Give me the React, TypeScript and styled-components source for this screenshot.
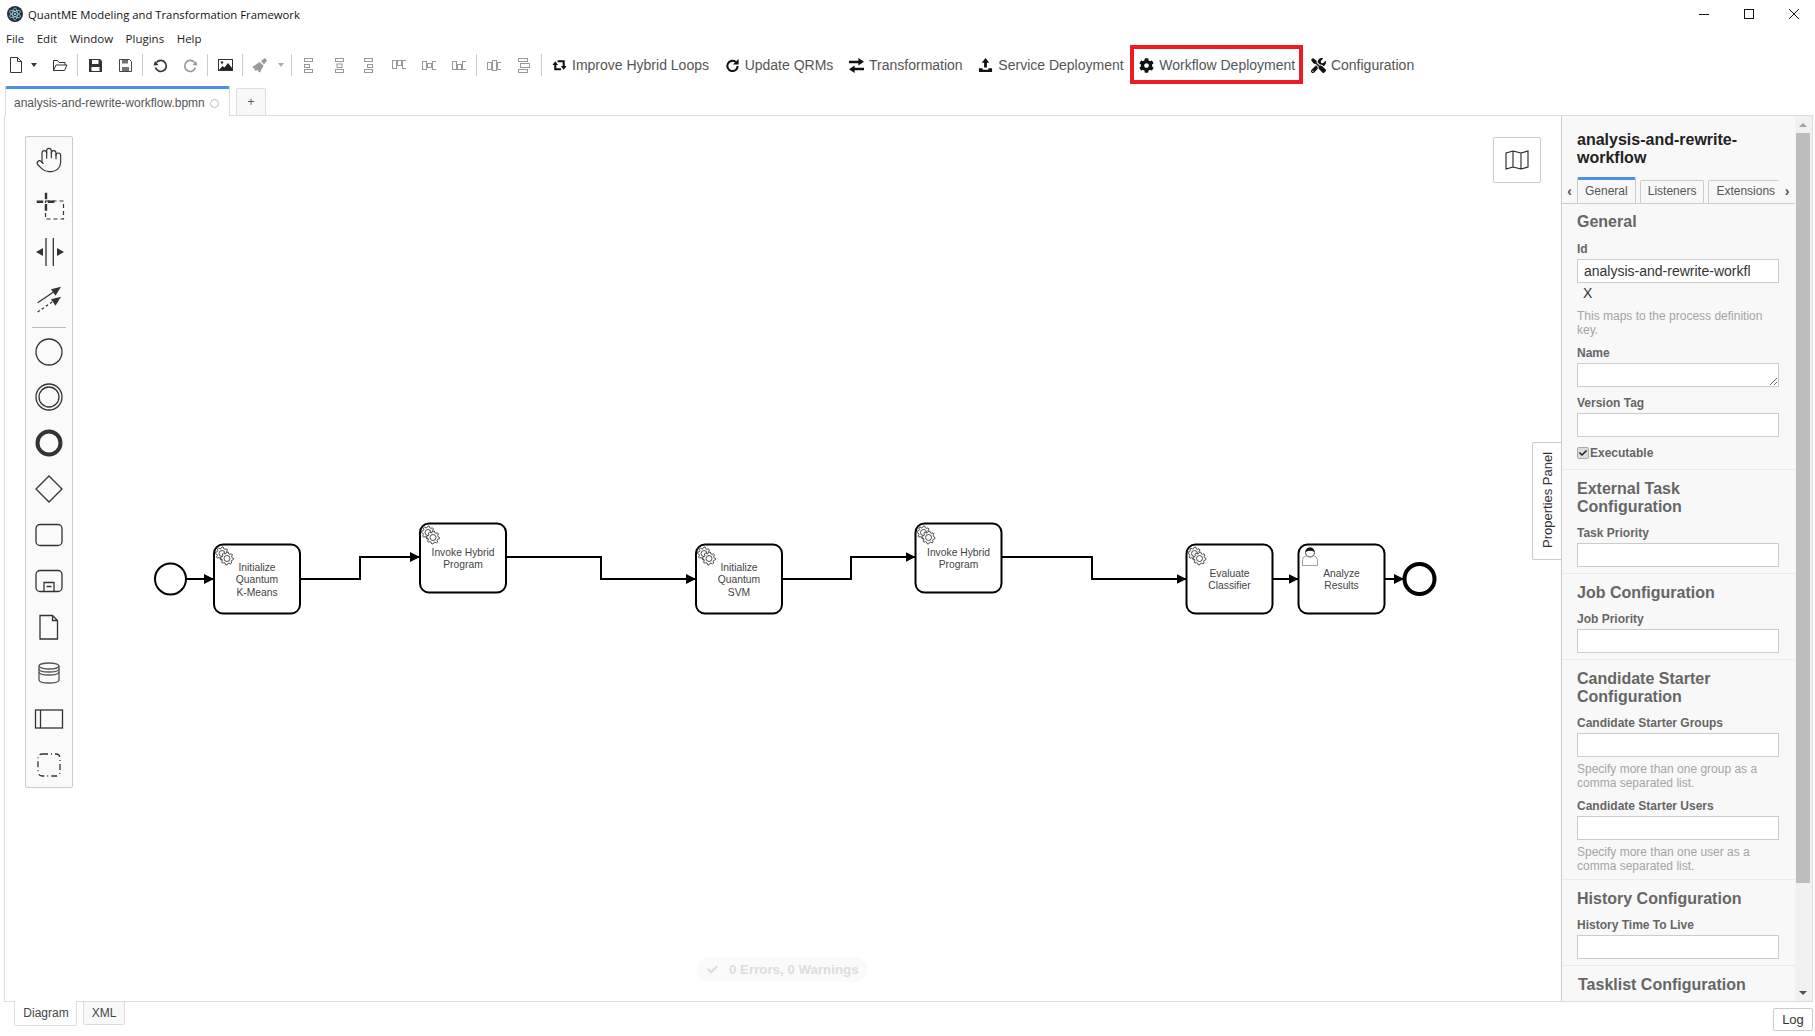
import React from 'react';
import styled, { createGlobalStyle } from 'styled-components';
import { Hand } from 'lucide-react';
import { FaCog, FaTools, FaCheck } from 'react-icons/fa';

const GlobalStyle = createGlobalStyle`
  html, body { margin: 0; padding: 0; height: 100%; background: #fff; }
  body { font-family: "Liberation Sans", Arial, sans-serif; color: #333; overflow: hidden; }
  * { box-sizing: border-box; }
`;

const Page = styled.div`
  display: flex;
  flex-direction: column;
  width: 1815px;
  height: 1036px;
`;

const TitleBar = styled.div`
  display: flex;
  align-items: center;
  height: 28px;
  padding: 0 16px 0 7px;
  font-family: "Open Sans", sans-serif;
  font-size: 11.3px;
  color: #111;
`;

const TitleText = styled.span`
  margin-left: 5px;
`;

const WindowControls = styled.div`
  display: flex;
  gap: 35px;
  margin-left: auto;
`;

const MenuBar = styled.div`
  display: flex;
  align-items: center;
  gap: 12.5px;
  height: 22px;
  padding: 0 0 2px 6px;
  font-family: "Open Sans", sans-serif;
  font-size: 11.5px;
  color: #222;
`;

const Toolbar = styled.div`
  display: flex;
  align-items: center;
  height: 30px;
  padding-left: 4px;
`;

const IconButton = styled.div<{ $w?: number; $pl?: number }>`
  display: flex;
  align-items: center;
  justify-content: center;
  width: ${p => p.$w ?? 30}px;
  height: 30px;
  padding-left: ${p => p.$pl ?? 0}px;
  flex: none;
`;

const Caret = styled.span<{ $off?: boolean }>`
  width: 0;
  height: 0;
  border-left: 3.5px solid transparent;
  border-right: 3.5px solid transparent;
  border-top: 4px solid ${p => (p.$off ? '#aaa' : '#333')};
`;

const Divider = styled.div`
  flex: none;
  width: 1px;
  height: 22px;
  margin: 0 2px;
  background: #ccc;
`;

const TextButtons = styled.div`
  display: flex;
  align-items: center;
  gap: 15.7px;
  margin-left: 8px;
`;

const TextButton = styled.div<{ $marked?: boolean }>`
  position: relative;
  display: flex;
  align-items: center;
  gap: 5px;
  height: 30px;
  font-size: 14px;
  color: #555;
  white-space: nowrap;

  svg {
    flex: none;
    width: 15px;
    height: 15px;
    color: #111;
  }

  ${p =>
    p.$marked &&
    `&::after {
      content: '';
      position: absolute;
      inset: -5px -8px -4px -9px;
      border: 4px solid #ed1c24;
    }`}
`;

const TabBar = styled.div`
  display: flex;
  align-items: flex-end;
  gap: 6px;
  height: 30px;
  margin-top: 5px;
  padding-left: 5px;
`;

const FileTab = styled.div`
  position: relative;
  display: flex;
  align-items: center;
  justify-content: space-between;
  width: 225px;
  height: 30px;
  margin-bottom: -1px;
  padding: 1px 10px 0 8px;
  background: #fff;
  border: 1px solid #ddd;
  border-top: 3px solid #4d90e8;
  border-bottom: none;
  border-radius: 2px 2px 0 0;
  font-size: 12px;
  color: #555;
`;

const DirtyDot = styled.span`
  width: 9px;
  height: 9px;
  border: 1px solid #bbb;
  border-radius: 50%;
`;

const AddTab = styled.div`
  display: flex;
  align-items: center;
  justify-content: center;
  width: 30px;
  height: 27px;
  background: #f8f8f8;
  border: 1px solid #ddd;
  border-bottom: none;
  border-radius: 2px 2px 0 0;
  font-size: 12px;
  color: #555;
`;

const Main = styled.div`
  display: flex;
  flex: 1;
  min-height: 0;
  margin: 0 2px 0 4px;
  border: 1px solid #ddd;
`;

const Canvas = styled.div`
  position: relative;
  flex: 1;
  min-width: 0;
  background: #fff;
`;

const Diagram = styled.svg`
  display: block;
  width: 100%;
  height: 100%;

  text {
    font-family: "Liberation Sans", Arial, sans-serif;
    font-size: 10.3px;
    fill: #444;
    text-anchor: middle;
    dominant-baseline: middle;
  }
`;

const Palette = styled.div`
  position: absolute;
  top: 20px;
  left: 20px;
  display: flex;
  flex-direction: column;
  width: 48px;
  background: #fafafa;
  border: 1px solid #ccc;
  border-radius: 2px;
`;

const PaletteEntry = styled.div`
  display: flex;
  align-items: center;
  justify-content: center;
  height: 45.9px;
  color: #333;
`;

const PaletteRule = styled.div`
  height: 1px;
  margin: 6px 6px 1px;
  background: #bbb;
`;

const MapToggle = styled.div`
  position: absolute;
  top: 21px;
  right: 20px;
  display: flex;
  align-items: center;
  justify-content: center;
  width: 48px;
  height: 46px;
  background: #fff;
  border: 1px solid #ccc;
  border-radius: 2px;
`;

const LintPill = styled.div`
  position: absolute;
  left: 692px;
  bottom: 19px;
  display: flex;
  align-items: center;
  gap: 11px;
  width: 171px;
  height: 25px;
  padding-left: 10px;
  background: #fafafa;
  border-radius: 13px;
  font-size: 13.3px;
  font-weight: bold;
  color: #ddd;
`;

const PanelToggle = styled.div`
  position: absolute;
  top: 326px;
  right: 0;
  display: flex;
  align-items: center;
  justify-content: center;
  width: 29px;
  height: 118px;
  padding-top: 2px;
  background: #fff;
  border: 1px solid #ccc;
  border-left: none;
  border-radius: 0 2px 2px 0;
  font-size: 13px;
  color: #333;
  writing-mode: vertical-rl;
  transform: rotate(180deg);
`;

const Panel = styled.div`
  display: flex;
  flex: none;
  width: 251px;
  background: #f8f8f8;
  border-left: 1px solid #ccc;
  overflow: hidden;
`;

const PanelBody = styled.div`
  flex: 1;
  min-width: 0;
  overflow: hidden;
`;

const PanelTitle = styled.div`
  padding: 15px 16px 0 15px;
  font-size: 16px;
  line-height: 18px;
  font-weight: bold;
  color: #222;
`;

const TabStrip = styled.div`
  display: flex;
  align-items: flex-end;
  height: 26px;
  margin-top: 11px;
  border-bottom: 1px solid #ccc;
`;

const TabArrow = styled.div<{ $w?: number }>`
  display: flex;
  align-items: center;
  justify-content: center;
  flex: none;
  width: ${p => p.$w ?? 15}px;
  height: 25px;
  font-size: 14px;
  font-weight: bold;
  color: #555;
`;

const TabRail = styled.div`
  display: flex;
  align-items: flex-end;
  gap: 4px;
  flex: 1;
  min-width: 0;
  height: 26px;
  overflow: hidden;
`;

const PanelTab = styled.div<{ $active?: boolean }>`
  flex: none;
  height: ${p => (p.$active ? 26 : 23)}px;
  padding: 0 7px;
  line-height: ${p => (p.$active ? 22 : 21)}px;
  font-size: 12px;
  color: #555;
  background: #f8f8f8;
  border: 1px solid #ccc;
  border-top: ${p => (p.$active ? '3px solid #4d90e8' : '1px solid #ccc')};
  border-bottom: none;
  border-radius: 2px 2px 0 0;
`;

const GroupTitle = styled.div`
  margin-bottom: 10px;
  font-size: 16px;
  line-height: 18px;
  font-weight: bold;
  color: #666;
`;

const Group = styled.div<{ $last?: boolean; $lead?: boolean }>`
  padding: ${p => (p.$lead ? 9 : 10)}px 16px ${p => (p.$lead ? 9 : 6)}px ${p => (p.$last ? 16 : 15)}px;
  border-bottom: ${p => (p.$last ? 'none' : '1px solid #eaeaea')};

  ${GroupTitle} {
    margin-bottom: ${p => (p.$lead ? 11 : 10)}px;
  }
`;

const Field = styled.div`
  margin-bottom: 9px;
  &:last-child { margin-bottom: 0; }
`;

const Label = styled.div`
  margin-bottom: 3px;
  font-size: 12px;
  line-height: 14px;
  font-weight: bold;
  color: #666;
`;

const Input = styled.input`
  display: block;
  width: 100%;
  height: 24px;
  padding: 0 28px 0 6px;
  background: #fff;
  border: 1px solid #ccc;
  border-radius: 0;
  outline: none;
  font-family: inherit;
  font-size: 14px;
  color: #333;
`;

const Area = styled.textarea`
  display: block;
  width: 100%;
  height: 24px;
  padding: 0 6px;
  background: #fff;
  border: 1px solid #ccc;
  border-radius: 0;
  outline: none;
`;

const ClearMark = styled.div`
  height: 14px;
  margin: 3px 0 9px;
  padding-left: 6px;
  font-size: 14px;
  line-height: 14px;
  color: #333;
`;

const Hint = styled.div<{ $top?: number }>`
  margin-top: ${p => p.$top ?? 5}px;
  font-size: 12px;
  line-height: 14px;
  color: #a5a5a5;
`;

const CheckRow = styled.div`
  display: flex;
  align-items: center;
  height: 14px;
  font-size: 12px;
  font-weight: bold;
  color: #666;
`;

const CheckBox = styled.span`
  display: flex;
  align-items: center;
  justify-content: center;
  width: 12px;
  height: 12px;
  margin-right: 1px;
  background: #ddd;
  border: 1px solid #aaa;
  border-radius: 2px;
  color: #222;
`;

const Scrollbar = styled.div`
  display: flex;
  flex-direction: column;
  flex: none;
  width: 17px;
  padding-left: 1px;
  background: #f1f1f1;
`;

const ScrollEnd = styled.div`
  display: flex;
  align-items: center;
  justify-content: center;
  flex: none;
  width: 14px;
  height: 17px;
`;

const ScrollUp = styled.span`
  width: 0;
  height: 0;
  border-left: 4px solid transparent;
  border-right: 4px solid transparent;
  border-bottom: 4px solid #a3a3a3;
`;

const ScrollDown = styled.span`
  width: 0;
  height: 0;
  border-left: 4px solid transparent;
  border-right: 4px solid transparent;
  border-top: 4px solid #505050;
`;

const ScrollThumb = styled.div`
  flex: none;
  width: 14px;
  height: 750px;
  background: #bdbdbd;
`;

const ScrollRest = styled.div`
  flex: 1;
`;

const Footer = styled.div`
  display: flex;
  align-items: flex-start;
  flex: none;
  height: 34px;
  padding: 0 2px 0 14px;
`;

const ViewTab = styled.div<{ $active?: boolean }>`
  display: flex;
  align-items: center;
  justify-content: center;
  width: ${p => (p.$active ? 63 : 42)}px;
  height: ${p => (p.$active ? 25 : 23)}px;
  margin-top: ${p => (p.$active ? -1 : 0)}px;
  margin-right: ${p => (p.$active ? 6 : 0)}px;
  padding-left: ${p => (p.$active ? 1 : 0)}px;
  background: ${p => (p.$active ? '#fff' : '#f8f8f8')};
  border: 1px solid #ddd;
  border-top: none;
  border-radius: 0 0 2px 2px;
  font-size: 12px;
  color: #444;
`;

const LogButton = styled.div`
  display: flex;
  align-items: center;
  justify-content: center;
  width: 40px;
  height: 23px;
  margin: 6px 0 0 auto;
  background: #fff;
  border: 1px solid #ccc;
  border-radius: 2px;
  font-size: 13px;
  color: #333;
`;

const DISABLED = '#999';

function AppLogo() {
  return (
    <svg width="16" height="16" viewBox="0 0 16 16">
      <circle cx="8" cy="8" r="8" fill="#2b2e3a" />
      <g fill="none" stroke="#9feaf9" strokeWidth="0.7">
        <ellipse cx="8" cy="8" rx="6" ry="2.4" transform="rotate(30 8 8)" />
        <ellipse cx="8" cy="8" rx="6" ry="2.4" transform="rotate(90 8 8)" />
        <ellipse cx="8" cy="8" rx="6" ry="2.4" transform="rotate(150 8 8)" />
      </g>
      <circle cx="8" cy="8" r="1" fill="#9feaf9" />
    </svg>
  );
}

const NewIcon = () => (
  <svg width="14" height="16" viewBox="0 0 14 16" fill="none" stroke="#333">
    <path d="M1.5.5h7l4 4v11h-11zM8.5.5v4h4" />
  </svg>
);

const OpenIcon = () => (
  <svg width="16" height="13" viewBox="0 0 16 13" fill="none" stroke="#333">
    <path d="M1.5 11.5v-10h4l1.5 2h6v2.5M1.5 11.5L4 6h11l-2.5 5.5z" />
  </svg>
);

const SaveIcon = () => (
  <svg width="13" height="13" viewBox="0 0 13 13">
    <path fillRule="evenodd" fill="#333" d="M0 0h11l2 2v11H0zM3 1v4h6.5V1zM2.5 8v4h8V8z" />
  </svg>
);

const SaveAsIcon = () => (
  <svg width="13" height="13" viewBox="0 0 13 13">
    <path d="M.5.5h10l2 2v10H.5z" fill="none" stroke="#444" />
    <path d="M3 1h6v3.5H3zM3 8h7v4H3z" fill="#444" opacity=".75" />
  </svg>
);

function TurnIcon({ color, flip }: { color: string; flip?: boolean }) {
  return (
    <svg width="15" height="15" viewBox="0 0 15 15">
      <g transform={flip ? 'matrix(-1 0 0 1 15 0)' : undefined}>
        <path d="M3.5 4.5a5.5 5.5 0 1 1-1 5" fill="none" stroke={color} strokeWidth="1.7" />
        <path d="M.5 7.5l5-.5L2 3z" fill={color} />
      </g>
    </svg>
  );
}

const PictureIcon = () => (
  <svg width="15" height="12" viewBox="0 0 15 12">
    <rect x=".5" y=".5" width="14" height="11" fill="#fff" stroke="#333" />
    <circle cx="4" cy="3.5" r="1.3" fill="#333" />
    <path d="M1 11l3.5-4 2 1.5L10 4l4 5v2z" fill="#222" />
  </svg>
);

const BrushIcon = () => (
  <svg width="17" height="15" viewBox="0 0 17 15" fill={DISABLED}>
    <path d="M9 3l4-3 2 2.5-3 4z" />
    <path d="M7.5 4l4 3.5-3.5 7-2-1-.5-2L4 13l-2-1.500 1.500-1.500-2 .5L.5 9z" />
  </svg>
);

type Box = [number, number, number, number];

const alignShapes: Box[][] = [
  [[.5, .5, 8, 3], [.5, 6.5, 5, 3], [.5, 11.5, 8, 3]],
  [[1.5, .5, 8, 3], [3, 6, 5, 3.5], [1.5, 11.5, 8, 3]],
  [[.5, .5, 8, 3], [3.5, 6.5, 5, 3], [.5, 11.5, 8, 3]],
];

const distributeShapes: Box[][] = [
  [[-1.5, 2.5, 4, 8], [3.5, 2.5, 4, 5], [8.5, 2.5, 4, 8]],
  [[-1.5, 3.5, 4, 8], [3.5, 5.5, 4, 4], [8.5, 3.5, 4, 8]],
  [[-1.5, 3.5, 4, 8], [3.5, 6.5, 4, 5], [8.5, 3.5, 4, 8]],
];

const spreadShapes: Box[][] = [
  [[-1.5, 4.5, 4, 7], [3.5, 2.5, 4, 10], [8.5, 4.5, 4, 7]],
  [[-.5, .5, 9, 3], [1.5, 5.5, 9, 4], [-.5, 11.5, 9, 3]],
];

function AlignIcon({ boxes }: { boxes: Box[] }) {
  return (
    <svg width="14" height="15" viewBox="0 0 14 15" fill="none" stroke={DISABLED}>
      {boxes.map((b, i) => (
        <rect key={i} x={b[0] + 2} y={b[1]} width={b[2]} height={b[3]} />
      ))}
    </svg>
  );
}

const LoopIcon = () => (
  <svg viewBox="0 0 16 16">
    <path d="M3.5 7v5h6M6 3.5h6.5V9" fill="none" stroke="currentColor" strokeWidth="2.2" />
    <path d="M.5 7.5l3-4 3 4zM9.5 8.5l3 4 3-4z" fill="currentColor" />
  </svg>
);

const RepeatIcon = () => (
  <svg viewBox="0 0 16 16">
    <path d="M13.5 8.5a5.5 5.5 0 1 1-2-4.3" fill="none" stroke="currentColor" strokeWidth="2.2" />
    <path d="M14.5 1v6h-6z" fill="currentColor" />
  </svg>
);

const TransferIcon = () => (
  <svg viewBox="0 0 16 16" fill="currentColor">
    <path d="M0 3h10V0l6 4-6 4V5.5H0z" />
    <path d="M16 10.5H6V8l-6 4 6 4v-3h10z" />
  </svg>
);

const UploadIcon = () => (
  <svg viewBox="0 0 16 16" fill="currentColor">
    <path d="M8 0l4 5H9.5v5h-3V5H4z" />
    <path d="M1 11h4v1.5h6V11h4v4H1z" />
  </svg>
);

const PaletteSvg = ({ children }: { children: React.ReactNode }) => (
  <svg width="36" height="36" viewBox="0 0 36 36" fill="none" stroke="#333" strokeWidth="1.3">
    {children}
  </svg>
);

const paletteTop = [
  <Hand key="hand" size={28} strokeWidth={1} color="#333" />,
  <PaletteSvg key="lasso">
    <path d="M5.7 13.7h6.5M16.7 13.7h6.6M15 4.700v6.500M15 16v6.700" strokeWidth="2.4" />
    <rect x="14.5" y="13" width="18" height="18" strokeDasharray="4 3" strokeWidth="1.2" />
  </PaletteSvg>,
  <PaletteSvg key="space">
    <path d="M15 4v28M22.3 4v28" />
    <path d="M5 18l7-4v8zM33 18l-7-4v8z" fill="#333" stroke="none" />
  </PaletteSvg>,
  <PaletteSvg key="connect">
    <path d="M6.7 22.7L24 11" />
    <path d="M30 6.7l-10 2.5 4.5 6.5z" fill="#333" stroke="none" />
    <path d="M6.7 32L24 20" strokeDasharray="2.5 2.5" />
    <path d="M30 16.7l-10 2.5 4.5 6.5z" fill="#333" stroke="none" />
  </PaletteSvg>,
];

const paletteShapes = [
  <PaletteSvg key="start"><circle cx="18" cy="18" r="13" /></PaletteSvg>,
  <PaletteSvg key="inter">
    <circle cx="18" cy="18" r="13" />
    <circle cx="18" cy="18" r="10" />
  </PaletteSvg>,
  <PaletteSvg key="end"><circle cx="18" cy="18" r="11.5" strokeWidth="4" /></PaletteSvg>,
  <PaletteSvg key="gateway"><path d="M18 5l13 13-13 13L5 18z" /></PaletteSvg>,
  <PaletteSvg key="task"><rect x="5" y="7.5" width="26" height="21" rx="4" /></PaletteSvg>,
  <PaletteSvg key="sub">
    <rect x="5" y="7.5" width="26" height="21" rx="4" />
    <path d="M13 28.5v-9h10v9M15.5 23.5h5" />
  </PaletteSvg>,
  <PaletteSvg key="data"><path d="M9 6.5h12.5l5 5V30H9zM21.5 6.5v5h5" /></PaletteSvg>,
  <PaletteSvg key="store">
    <path d="M8 11v14c0 4 20 4 20 0V11" stroke="#555" />
    <ellipse cx="18" cy="11" rx="10" ry="3" stroke="#555" />
    <path d="M8 14c0 4 20 4 20 0M8 17c0 4 20 4 20 0" stroke="#555" />
  </PaletteSvg>,
  <PaletteSvg key="pool">
    <rect x="4.5" y="9" width="27" height="18" />
    <path d="M9.5 9v18" />
  </PaletteSvg>,
  <PaletteSvg key="group">
    <rect x="7" y="7" width="22" height="22" rx="4" strokeDasharray="6 3 1 3" />
  </PaletteSvg>,
];

function gearPath(cx: number, cy: number, outer: number, inner: number, teeth: number) {
  const pts: string[] = [];
  const step = (Math.PI * 2) / (teeth * 4);
  for (let i = 0; i < teeth * 4; i++) {
    const r = i % 4 < 2 ? outer : inner;
    pts.push(`${(cx + r * Math.cos(i * step)).toFixed(2)} ${(cy + r * Math.sin(i * step)).toFixed(2)}`);
  }
  return `M${pts.join('L')}Z`;
}

function ServiceMarker({ x, y }: { x: number; y: number }) {
  return (
    <g fill="#fff" stroke="#222" strokeWidth="0.8">
      <path d={gearPath(x + 8, y + 7, 6.5, 5, 8)} />
      <circle cx={x + 8} cy={y + 7} r="3" />
      <path d={gearPath(x + 13, y + 12, 6.5, 5, 8)} />
      <circle cx={x + 13} cy={y + 12} r="3" />
    </g>
  );
}

function UserMarker({ x, y }: { x: number; y: number }) {
  return (
    <g>
      <path d={`M${x} ${y + 18}v-6q0-3 5-4h5q5 1 5 4v6z`} fill="#fff" stroke="#888" strokeWidth="0.8" />
      <circle cx={x + 7.5} cy={y + 5} r="4.5" fill="#fff" stroke="#222" strokeWidth="0.8" />
      <path d={`M${x + 3} ${y + 4.5}a4.5 4.5 0 0 1 9 0q-4-2.5-9 0z`} fill="#111" />
    </g>
  );
}

type TaskNode = { x: number; y: number; kind: 'service' | 'user'; lines: string[] };

const TASKS: TaskNode[] = [
  { x: 214, y: 544.5, kind: 'service', lines: ['Initialize', 'Quantum', 'K-Means'] },
  { x: 420, y: 523.5, kind: 'service', lines: ['Invoke Hybrid', 'Program'] },
  { x: 696, y: 544.5, kind: 'service', lines: ['Initialize', 'Quantum', 'SVM'] },
  { x: 915.5, y: 523.5, kind: 'service', lines: ['Invoke Hybrid', 'Program'] },
  { x: 1186.5, y: 544.5, kind: 'service', lines: ['Evaluate', 'Classifier'] },
  { x: 1298.5, y: 544.5, kind: 'user', lines: ['Analyze', 'Results'] },
];

const FLOWS = [
  'M186 579H214',
  'M300 579H360V557H420',
  'M506 557H601V579H696',
  'M782 579H851V557H915.5',
  'M1001.5 557H1092V579H1186.5',
  'M1272.5 579H1298.5',
  'M1384.5 579H1404',
];

function Task({ node }: { node: TaskNode }) {
  const cx = node.x + 43;
  const cy = node.y + 36;
  const first = cy - ((node.lines.length - 1) * 12.5) / 2;
  return (
    <g>
      <rect x={node.x} y={node.y} width="86" height="69" rx="9" fill="#fff" stroke="#000" strokeWidth="2" />
      {node.kind === 'service' ? (
        <ServiceMarker x={node.x} y={node.y + 2} />
      ) : (
        <UserMarker x={node.x + 4} y={node.y + 3} />
      )}
      {node.lines.map((l, i) => (
        <text key={i} x={cx} y={first + i * 12.5}>
          {l}
        </text>
      ))}
    </g>
  );
}

export default function App() {
  return (
    <Page>
      <GlobalStyle />
      <TitleBar>
        <AppLogo />
        <TitleText>QuantME Modeling and Transformation Framework</TitleText>
        <WindowControls>
          <svg width="10" height="10" viewBox="0 0 10 10" stroke="#111"><path d="M0 5.5h10" /></svg>
          <svg width="10" height="10" viewBox="0 0 10 10" fill="none" stroke="#111"><rect x=".5" y=".5" width="9" height="9" /></svg>
          <svg width="10" height="10" viewBox="0 0 10 10" stroke="#111"><path d="M0 0l10 10M10 0L0 10" /></svg>
        </WindowControls>
      </TitleBar>
      <MenuBar>
        <span>File</span>
        <span>Edit</span>
        <span>Window</span>
        <span>Plugins</span>
        <span>Help</span>
      </MenuBar>
      <Toolbar>
        <IconButton $w={24}><NewIcon /></IconButton>
        <IconButton $w={12}><Caret /></IconButton>
        <IconButton $w={35} $pl={5}><OpenIcon /></IconButton>
        <Divider />
        <IconButton><SaveIcon /></IconButton>
        <IconButton><SaveAsIcon /></IconButton>
        <Divider />
        <IconButton><TurnIcon color="#333" /></IconButton>
        <IconButton><TurnIcon color={DISABLED} flip /></IconButton>
        <Divider />
        <IconButton><PictureIcon /></IconButton>
        <Divider />
        <IconButton $w={27} $pl={3}><BrushIcon /></IconButton>
        <IconButton $w={17}><Caret $off /></IconButton>
        <Divider />
        {alignShapes.map((boxes, i) => (
          <IconButton key={i}><AlignIcon boxes={boxes} /></IconButton>
        ))}
        {distributeShapes.map((boxes, i) => (
          <IconButton key={i}><AlignIcon boxes={boxes} /></IconButton>
        ))}
        <Divider />
        {spreadShapes.map((boxes, i) => (
          <IconButton key={i}><AlignIcon boxes={boxes} /></IconButton>
        ))}
        <Divider />
        <TextButtons>
          <TextButton><LoopIcon />Improve Hybrid Loops</TextButton>
          <TextButton><RepeatIcon />Update QRMs</TextButton>
          <TextButton><TransferIcon />Transformation</TextButton>
          <TextButton><UploadIcon />Service Deployment</TextButton>
          <TextButton $marked><FaCog />Workflow Deployment</TextButton>
          <TextButton><FaTools />Configuration</TextButton>
        </TextButtons>
      </Toolbar>
      <TabBar>
        <FileTab>
          analysis-and-rewrite-workflow.bpmn
          <DirtyDot />
        </FileTab>
        <AddTab>+</AddTab>
      </TabBar>
      <Main>
        <Canvas>
          <Diagram viewBox="5 116 1556 885">
            <defs>
              <marker id="flow-end" viewBox="0 0 10 10" refX="10" refY="5" markerWidth="5" markerHeight="5" orient="auto">
                <path d="M0 0L10 5L0 10z" fill="#000" />
              </marker>
            </defs>
            <circle cx="170.5" cy="579" r="15.5" fill="#fff" stroke="#000" strokeWidth="2" />
            {FLOWS.map(d => (
              <path key={d} d={d} fill="none" stroke="#000" strokeWidth="2" markerEnd="url(#flow-end)" />
            ))}
            {TASKS.map((t, i) => (
              <Task key={i} node={t} />
            ))}
            <circle cx="1419.5" cy="579" r="15" fill="#fff" stroke="#000" strokeWidth="4" />
          </Diagram>
          <Palette>
            {paletteTop.map((icon, i) => (
              <PaletteEntry key={i}>{icon}</PaletteEntry>
            ))}
            <PaletteRule />
            {paletteShapes.map((icon, i) => (
              <PaletteEntry key={i}>{icon}</PaletteEntry>
            ))}
          </Palette>
          <MapToggle>
            <svg width="24" height="20" viewBox="0 0 24 20" fill="none" stroke="#222" strokeWidth="1.1">
              <path d="M1 3l7-2 8 2 7-2v16l-7 2-8-2-7 2zM8 1v16M16 3v16" />
            </svg>
          </MapToggle>
          <LintPill>
            <FaCheck size={11} />
            0 Errors, 0 Warnings
          </LintPill>
          <PanelToggle>Properties Panel</PanelToggle>
        </Canvas>
        <Panel>
          <PanelBody>
            <PanelTitle>analysis-and-rewrite-workflow</PanelTitle>
            <TabStrip>
              <TabArrow>‹</TabArrow>
              <TabRail>
                <PanelTab $active>General</PanelTab>
                <PanelTab>Listeners</PanelTab>
                <PanelTab>Extensions</PanelTab>
              </TabRail>
              <TabArrow $w={16}>›</TabArrow>
            </TabStrip>
            <Group $lead>
              <GroupTitle>General</GroupTitle>
              <Field>
                <Label>Id</Label>
                <Input readOnly value="analysis-and-rewrite-workflow" />
                <ClearMark>X</ClearMark>
                <Hint $top={0}>This maps to the process definition key.</Hint>
              </Field>
              <Field>
                <Label>Name</Label>
                <Area readOnly />
              </Field>
              <Field>
                <Label>Version Tag</Label>
                <Input readOnly />
              </Field>
              <CheckRow>
                <CheckBox><FaCheck size={8} /></CheckBox>
                Executable
              </CheckRow>
            </Group>
            <Group>
              <GroupTitle>External Task Configuration</GroupTitle>
              <Label>Task Priority</Label>
              <Input readOnly />
            </Group>
            <Group>
              <GroupTitle>Job Configuration</GroupTitle>
              <Label>Job Priority</Label>
              <Input readOnly />
            </Group>
            <Group>
              <GroupTitle>Candidate Starter Configuration</GroupTitle>
              <Field>
                <Label>Candidate Starter Groups</Label>
                <Input readOnly />
                <Hint>Specify more than one group as a comma separated list.</Hint>
              </Field>
              <Field>
                <Label>Candidate Starter Users</Label>
                <Input readOnly />
                <Hint>Specify more than one user as a comma separated list.</Hint>
              </Field>
            </Group>
            <Group>
              <GroupTitle>History Configuration</GroupTitle>
              <Label>History Time To Live</Label>
              <Input readOnly />
            </Group>
            <Group $last>
              <GroupTitle>Tasklist Configuration</GroupTitle>
            </Group>
          </PanelBody>
          <Scrollbar>
            <ScrollEnd><ScrollUp /></ScrollEnd>
            <ScrollThumb />
            <ScrollRest />
            <ScrollEnd><ScrollDown /></ScrollEnd>
          </Scrollbar>
        </Panel>
      </Main>
      <Footer>
        <ViewTab $active>Diagram</ViewTab>
        <ViewTab>XML</ViewTab>
        <LogButton>Log</LogButton>
      </Footer>
    </Page>
  );
}
